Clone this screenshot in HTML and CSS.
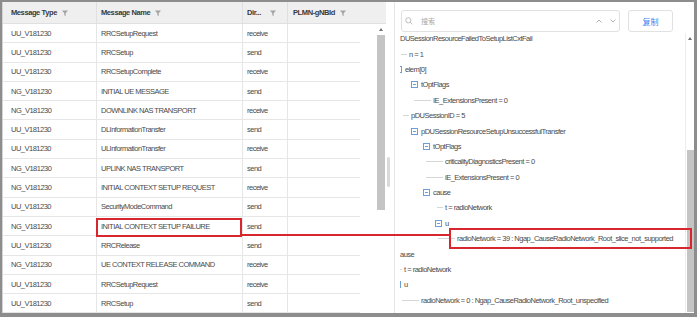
FILE: index.html
```html
<!DOCTYPE html>
<html lang="en">
<head>
  <meta charset="UTF-8">
  <title>Message Trace</title>
  <link rel="stylesheet" href="styles.css">
</head>
<body>

  <div class="frame">

    <div class="grid-pane">
      <div class="head">
        <div class="c c1">Message Type <svg class="flt" width="6" height="6" viewBox="0 0 6 6"><path d="M0 0.5h6L3.7 3.2V6L2.3 5.2V3.2z" fill="#a3a3a3"/></svg></div>
        <div class="c c2">Message Name <svg class="flt" width="6" height="6" viewBox="0 0 6 6"><path d="M0 0.5h6L3.7 3.2V6L2.3 5.2V3.2z" fill="#a3a3a3"/></svg></div>
        <div class="c c3 split-head">Dir... <svg class="flt" width="6" height="6" viewBox="0 0 6 6"><path d="M0 0.5h6L3.7 3.2V6L2.3 5.2V3.2z" fill="#a3a3a3"/></svg></div>
        <div class="c c4">PLMN-gNBId <svg class="flt" width="6" height="6" viewBox="0 0 6 6"><path d="M0 0.5h6L3.7 3.2V6L2.3 5.2V3.2z" fill="#a3a3a3"/></svg></div>
      </div>

      <div class="grid-body">
        <div class="rows">
          <div class="row"><div class="c c1">UU_V181230</div><div class="c c2">RRCSetupRequest</div><div class="c c3">receive</div><div class="c c4"></div></div>
          <div class="row"><div class="c c1">UU_V181230</div><div class="c c2">RRCSetup</div><div class="c c3">send</div><div class="c c4"></div></div>
          <div class="row"><div class="c c1">UU_V181230</div><div class="c c2">RRCSetupComplete</div><div class="c c3">receive</div><div class="c c4"></div></div>
          <div class="row"><div class="c c1">NG_V181230</div><div class="c c2">INITIAL UE MESSAGE</div><div class="c c3">send</div><div class="c c4"></div></div>
          <div class="row"><div class="c c1">NG_V181230</div><div class="c c2">DOWNLINK NAS TRANSPORT</div><div class="c c3">receive</div><div class="c c4"></div></div>
          <div class="row"><div class="c c1">UU_V181230</div><div class="c c2">DLInformationTransfer</div><div class="c c3">send</div><div class="c c4"></div></div>
          <div class="row"><div class="c c1">UU_V181230</div><div class="c c2">ULInformationTransfer</div><div class="c c3">receive</div><div class="c c4"></div></div>
          <div class="row"><div class="c c1">NG_V181230</div><div class="c c2">UPLINK NAS TRANSPORT</div><div class="c c3">send</div><div class="c c4"></div></div>
          <div class="row"><div class="c c1">NG_V181230</div><div class="c c2">INITIAL CONTEXT SETUP REQUEST</div><div class="c c3">receive</div><div class="c c4"></div></div>
          <div class="row"><div class="c c1">UU_V181230</div><div class="c c2">SecurityModeCommand</div><div class="c c3">send</div><div class="c c4"></div></div>
          <div class="row"><div class="c c1">NG_V181230</div><div class="c c2">INITIAL CONTEXT SETUP FAILURE</div><div class="c c3">send</div><div class="c c4"></div></div>
          <div class="row"><div class="c c1">UU_V181230</div><div class="c c2">RRCRelease</div><div class="c c3">send</div><div class="c c4"></div></div>
          <div class="row"><div class="c c1">NG_V181230</div><div class="c c2">UE CONTEXT RELEASE COMMAND</div><div class="c c3">receive</div><div class="c c4"></div></div>
          <div class="row"><div class="c c1">UU_V181230</div><div class="c c2">RRCSetupRequest</div><div class="c c3">receive</div><div class="c c4"></div></div>
          <div class="row"><div class="c c1">UU_V181230</div><div class="c c2">RRCSetup</div><div class="c c3">send</div><div class="c c4"></div></div>
        </div>
        <div class="vbar">
          <span class="arrow"></span>
          <span class="thumb"></span>
        </div>
      </div>
    </div>

    <div class="splitter"><span class="grip"></span></div>

    <div class="detail">
      <div class="tools">
        <div class="search">
          <svg width="8" height="8" viewBox="0 0 8 8"><circle cx="3.3" cy="3.3" r="2.6" fill="none" stroke="#b5b5b5" stroke-width="0.9"/><path d="M5.2 5.2L7.4 7.4" stroke="#b5b5b5" stroke-width="0.9"/></svg>
          <span class="ph">搜索</span>
          <span class="nav">
            <svg width="6" height="4" viewBox="0 0 6 4"><path d="M0.5 3.5L3 1l2.5 2.5" fill="none" stroke="#a8a8a8" stroke-width="0.9"/></svg>
            <svg width="6" height="4" viewBox="0 0 6 4"><path d="M0.5 0.5L3 3l2.5-2.5" fill="none" stroke="#a8a8a8" stroke-width="0.9"/></svg>
          </span>
        </div>
        <button class="copy">复制</button>
      </div>

      <div class="detail-body">
        <div class="tree">
          <div class="tr">DUSessionResourceFailedToSetupListCxtFail</div>
          <div class="tr leaf m1">n = 1</div>
          <div class="tr m-5"><span class="tg"></span>elem[0]</div>
          <div class="tr m11"><span class="tg"></span>tOptFlags</div>
          <div class="tr leaf m14 long">IE_ExtensionsPresent = 0</div>
          <div class="tr leaf m3">pDUSessionID = 5</div>
          <div class="tr m11"><span class="tg"></span>pDUSessionResourceSetupUnsuccessfulTransfer</div>
          <div class="tr m23"><span class="tg"></span>tOptFlags</div>
          <div class="tr leaf m26 long">criticalityDiagnosticsPresent = 0</div>
          <div class="tr leaf m26 long">iE_ExtensionsPresent = 0</div>
          <div class="tr m23"><span class="tg"></span>cause</div>
          <div class="tr leaf m37">t = radioNetwork</div>
          <div class="tr m35"><span class="tg"></span>u</div>
          <div class="tr leaf m38 long">radioNetwork = 39 : Ngap_CauseRadioNetwork_Root_slice_not_supported</div>
          <div class="tr">ause</div>
          <div class="tr leaf m-4">t = radioNetwork</div>
          <div class="tr m-6"><span class="tg"></span>u</div>
          <div class="tr leaf m2 long">radioNetwork = 0 : Ngap_CauseRadioNetwork_Root_unspecified</div>
        </div>
        <div class="vbar side">
          <span class="arrow"></span>
          <span class="thumb"></span>
        </div>
      </div>
    </div>

    <!-- annotation marks drawn over the screenshot -->
    <div class="mark mark-a"></div>
    <div class="mark-line"></div>
    <div class="mark mark-b"></div>

  </div>

</body>
</html>
```

FILE: styles.css
```css
* {
  margin: 0;
  padding: 0;
  box-sizing: border-box;
}

body {
  width: 697px;
  height: 317px;
  overflow: hidden;
  background: #fff;
  font-family: "Liberation Sans", Arial, sans-serif;
  font-size: 7.5px;
  letter-spacing: -0.5px;
  color: #4a4a4a;
}

.frame {
  position: relative;
  display: flex;
  width: 697px;
  height: 317px;
  border: 2px solid #8d8d8d;
  border-right-width: 3px;
  border-bottom-width: 4px;
}

/* left grid */

.grid-pane {
  width: 384px;
  display: flex;
  flex-direction: column;
  border-left: 1px solid #d4d4d4;
}

.head {
  display: flex;
  height: 22px;
  flex-shrink: 0;
  background: #efefef;
  border-bottom: 1px solid #e0e0e0;
  font-weight: bold;
  color: #3a3a3a;
  letter-spacing: -0.4px;
}

.head .c {
  display: flex;
  align-items: center;
  gap: 5px;
  border-right: 1px solid #e0e0e0;
}

.head .c4 {
  border-right: none;
}

.head .split-head {
  justify-content: space-between;
  padding-right: 11px;
}

.c1 { width: 94px; padding-left: 8px; }
.c2 { width: 146px; padding-left: 4px; }
.c3 { width: 45px; padding-left: 4px; }
.c4 { width: 72px; padding-left: 5px; }

.grid-body {
  flex: 1;
  display: flex;
  overflow: hidden;
}

.rows {
  width: 373px;
}

.row {
  display: flex;
  height: 19.3px;
}

.row .c {
  display: flex;
  align-items: center;
  white-space: nowrap;
  border-bottom: 1px solid #e6e6e6;
  border-right: 1px solid #e6e6e6;
}

.row .c4 {
  border-right: none;
}

.vbar {
  width: 10px;
  display: flex;
  flex-direction: column;
  align-items: center;
}

.arrow {
  width: 0;
  height: 0;
  margin-top: 4px;
  border-left: 2.5px solid transparent;
  border-right: 2.5px solid transparent;
  border-bottom: 3px solid #707070;
}

.thumb {
  width: 8px;
  margin-top: 4px;
  height: 175px;
  background: #c4c4c4;
}

/* splitter */

.splitter {
  width: 9px;
  display: flex;
  align-items: center;
  padding-top: 29px;
  border-right: 1px solid #e6e6e6;
}

.grip {
  width: 3px;
  height: 30px;
  margin-left: 1px;
  border-radius: 2px;
  background: #d9d9d9;
}

/* right detail */

.detail {
  flex: 1;
  display: flex;
  flex-direction: column;
}

.tools {
  display: flex;
  gap: 8px;
  height: 29px;
  padding: 8px 0 0 6px;
}

.search {
  width: 219px;
  height: 22px;
  flex-shrink: 0;
  display: flex;
  align-items: center;
  padding-left: 3px;
  border: 1px solid #e1e1e1;
  border-radius: 3px;
  background: #fff;
}

.ph {
  margin-left: 8px;
  color: #a8a8a8;
  font-family: "Noto Sans CJK SC", sans-serif;
  font-size: 7px;
  letter-spacing: 0;
}

.nav {
  margin-left: auto;
  margin-right: 3px;
  display: flex;
  align-items: center;
  gap: 8px;
}

.copy {
  width: 45px;
  height: 22px;
  flex-shrink: 0;
  border: 1px solid #e1e1e1;
  border-radius: 3px;
  background: #fff;
  color: #3b7ff0;
  font-family: "Noto Sans CJK SC", sans-serif;
  font-size: 8px;
}

.detail-body {
  flex: 1;
  display: flex;
  overflow: hidden;
}

.tree {
  flex: 1;
  margin-left: 5px;
  overflow: hidden;
  white-space: nowrap;
}

.tr {
  display: flex;
  align-items: center;
  height: 15.4px;
}

.tg {
  width: 7px;
  height: 7px;
  margin-right: 3px;
  flex-shrink: 0;
  display: flex;
  align-items: center;
  justify-content: center;
  border: 1px solid #6c9fd6;
}

.tg::after {
  content: "";
  width: 3px;
  height: 1px;
  background: #6c9fd6;
}

.leaf::before {
  content: "";
  width: 6px;
  height: 1px;
  margin-right: 2px;
  flex-shrink: 0;
  background: #d6d6d6;
}

.leaf.long::before {
  width: 17px;
}

.m-6 { margin-left: -6px; }
.m-5 { margin-left: -5px; }
.m-4 { margin-left: -4px; }
.m1 { margin-left: 1px; }
.m2 { margin-left: 2px; }
.m3 { margin-left: 3px; }
.m11 { margin-left: 11px; }
.m14 { margin-left: 14px; }
.m23 { margin-left: 23px; }
.m26 { margin-left: 26px; }
.m35 { margin-left: 35px; }
.m37 { margin-left: 37px; }
.m38 { margin-left: 38px; }

.vbar.side {
  width: 9px;
  margin-top: 2px;
  border-left: 1px solid #ececec;
}

.vbar.side .thumb {
  width: 7px;
  margin-top: 110px;
  height: 162px;
}

/* red annotation */

.mark {
  position: absolute;
  border: 2px solid #d8262e;
}

.mark-a {
  left: 94px;
  top: 216px;
  width: 146px;
  height: 19px;
}

.mark-b {
  left: 447px;
  top: 226px;
  width: 243px;
  height: 21px;
}

.mark-line {
  position: absolute;
  left: 239px;
  top: 232px;
  width: 208px;
  height: 2px;
  background: #d8262e;
}
```
